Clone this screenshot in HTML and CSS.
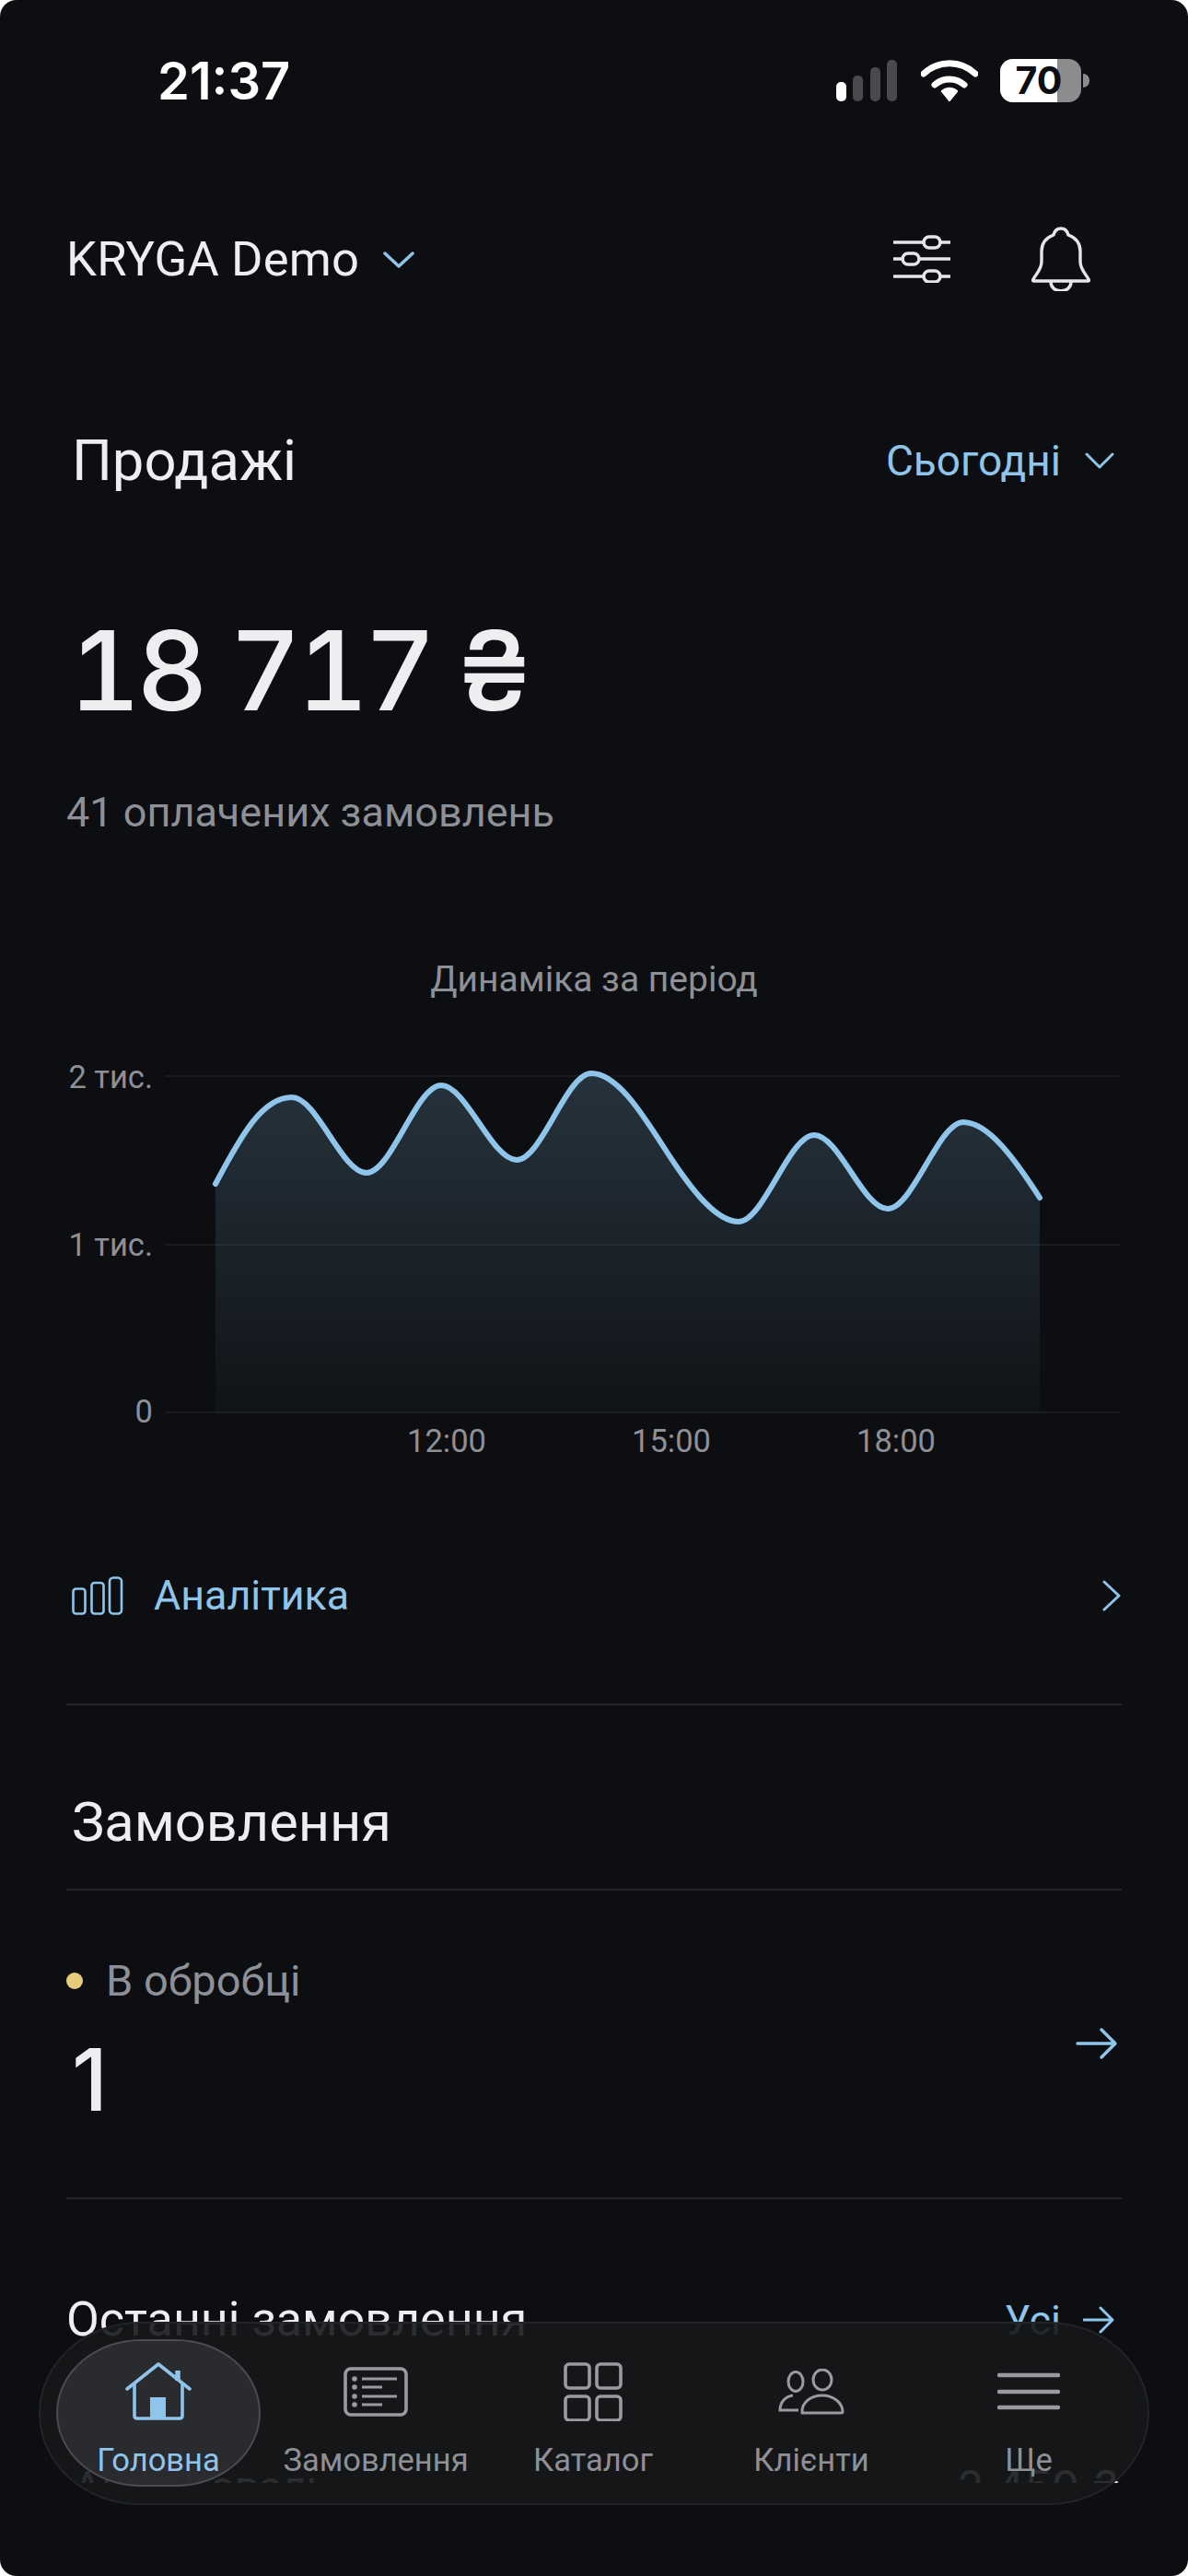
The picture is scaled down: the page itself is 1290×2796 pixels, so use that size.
FILE: index.html
```html
<!DOCTYPE html>
<html lang="uk">
<head>
<meta charset="utf-8">
<title>KRYGA Demo</title>
<link rel="stylesheet" href="styles.css">
</head>
<body>
<div class="screen">
  <main class="content">
    <div class="status">
      <span class="time">21:37</span>
      <div class="status-icons">
        <svg width="68" height="46" viewBox="0 0 68 46"><rect x="0" y="24" width="11" height="21" rx="5" fill="#fff"/><rect x="18" y="17" width="11" height="28" rx="5" fill="#4a4a4c"/><rect x="37" y="8" width="11" height="37" rx="5" fill="#4a4a4c"/><rect x="55" y="0" width="11" height="45" rx="5" fill="#4a4a4c"/></svg>
        <svg class="wifi" width="62" height="46" viewBox="0 0 62 46" fill="none"><path d="M3 15C19 0 43 0 59 15" stroke="#fff" stroke-width="7" stroke-linecap="round"/><path d="M15 27C24 19 38 19 47 27" stroke="#fff" stroke-width="7" stroke-linecap="round"/><path d="M22 34C27 29 35 29 40 34L31 45Z" fill="#fff" stroke="#fff" stroke-width="1" stroke-linejoin="round"/></svg>
        <div class="battery"><span class="battery-fill"></span><span class="battery-num">70</span><span class="battery-nub"></span></div>
      </div>
    </div>

    <header class="topbar">
      <div class="store">
        <span class="store-name">KRYGA Demo</span>
        <svg class="chev" width="34" height="20" viewBox="0 0 34 20" fill="none"><path d="M2 3L17 17L32 3" stroke="#8fc5ea" stroke-width="3.5" stroke-linecap="round" stroke-linejoin="round"/></svg>
      </div>
      <div class="top-actions">
        <svg width="62" height="52" viewBox="0 0 62 52" fill="none" stroke="#e6e6ea" stroke-width="3.4"><path d="M1 8H33M51 8H61M1 26H10M28 26H61M1 45H33M51 45H61" stroke-linecap="round"/><rect x="33" y="2" width="18" height="12" rx="6"/><rect x="10" y="20" width="18" height="12" rx="6"/><rect x="33" y="39" width="18" height="12" rx="6"/></svg>
        <svg width="64" height="70" viewBox="0 0 64 70" fill="none" stroke="#e6e6ea" stroke-width="3.4" stroke-linejoin="round"><path d="M32 2C27 2 25 5 24 9C16 12 11 18 11 27V38C11 46 6 50 2 57C1 59 2 59 4 59H60C62 59 63 59 62 57C58 50 53 46 53 38V27C53 18 48 12 40 9C39 5 37 2 32 2Z"/><path d="M21 60C21 73 43 73 43 60"/></svg>
      </div>
    </header>

    <section class="sales">
      <div class="section-head">
        <h2 class="h-title sales-title">Продажі</h2>
        <div class="period">
          <span>Сьогодні</span>
          <svg width="32" height="18" viewBox="0 0 32 18" fill="none"><path d="M2 2L16 16L30 2" stroke="#8fc5ea" stroke-width="3" stroke-linecap="round" stroke-linejoin="round"/></svg>
        </div>
      </div>
      <div class="amount">18 717 ₴</div>
      <div class="paid">41 оплачених замовлень</div>
    </section>

    <section class="chart-wrap">
      <div class="chart-title">Динаміка за період</div>
      <svg class="chart" width="1290" height="420" viewBox="0 1150 1290 420">
        <defs>
          <linearGradient id="area" x1="0" y1="0" x2="0" y2="1">
            <stop offset="0" stop-color="#8fc5ea" stop-opacity=".2"/>
            <stop offset="1" stop-color="#8fc5ea" stop-opacity=".03"/>
          </linearGradient>
        </defs>
        <path fill="url(#area)" d="M234 1285C262 1232 285 1191 317 1191C344 1191 371 1273 398 1273C425 1273 452 1178 479 1178C506 1178 534 1259 561 1259C588 1259 615 1165 642 1165C669 1165 695 1205 720 1244C745 1283 775 1326 802 1326C829 1326 857 1232 884 1232C911 1232 937 1312 964 1312C991 1312 1019 1218 1046 1218C1073 1218 1102 1258 1129 1300V1533H234Z"/>
        <g stroke="#fff" stroke-opacity=".05" stroke-width="2"><path d="M179 1168H1217"/><path d="M179 1351H1217"/><path d="M179 1533H1217"/></g>
        <path fill="none" stroke="#8fc5ea" stroke-width="6" stroke-linecap="round" d="M234 1285C262 1232 285 1191 317 1191C344 1191 371 1273 398 1273C425 1273 452 1178 479 1178C506 1178 534 1259 561 1259C588 1259 615 1165 642 1165C669 1165 695 1205 720 1244C745 1283 775 1326 802 1326C829 1326 857 1232 884 1232C911 1232 937 1312 964 1312C991 1312 1019 1218 1046 1218C1073 1218 1102 1258 1129 1300"/>
        <g class="axis">
          <text x="166" y="1181" text-anchor="end">2 тис.</text>
          <text x="166" y="1363" text-anchor="end">1 тис.</text>
          <text x="166" y="1544" text-anchor="end">0</text>
          <text x="485" y="1576" text-anchor="middle">12:00</text>
          <text x="729" y="1576" text-anchor="middle">15:00</text>
          <text x="973" y="1576" text-anchor="middle">18:00</text>
        </g>
      </svg>
    </section>

    <a class="analytics">
      <svg width="56" height="42" viewBox="0 0 56 42" fill="none" stroke="#8fc5ea" stroke-width="2.6"><rect x="1.5" y="13.5" width="13" height="27" rx="3"/><rect x="21.5" y="7" width="13" height="33.5" rx="3"/><rect x="41" y="1.5" width="13" height="39" rx="4"/></svg>
      <span class="analytics-label">Аналітика</span>
      <svg class="row-chev" width="22" height="34" viewBox="0 0 22 34" fill="none"><path d="M3 2L19 17L3 32" stroke="#8fc5ea" stroke-width="3" stroke-linecap="round" stroke-linejoin="round"/></svg>
    </a>

    <section class="orders">
      <h2 class="h-title orders-title">Замовлення</h2>
      <div class="order-status">
        <div>
          <div class="status-line"><span class="dot"></span>В обробці</div>
          <div class="count">1</div>
        </div>
        <svg width="46" height="36" viewBox="0 0 46 36" fill="none"><path d="M2 18H43M28 3L43 18L28 33" stroke="#8fc5ea" stroke-width="3.4" stroke-linecap="round" stroke-linejoin="round"/></svg>
      </div>
    </section>

    <section class="recent">
      <div class="recent-head">
        <h3 class="recent-title">Останні замовлення</h3>
        <div class="recent-all">Усі
          <svg width="34" height="30" viewBox="0 0 34 30" fill="none"><path d="M1 15H32M19 2L32 15L19 28" stroke="#8fc5ea" stroke-width="3" stroke-linecap="round" stroke-linejoin="round"/></svg>
        </div>
      </div>
      <div class="recent-row">
        <span class="client">Анна Коваль</span>
        <span class="client-sum">2 450 ₴</span>
      </div>
    </section>
  </main>

  <nav class="tabbar">
    <a class="tab tab-active">
      <span class="tab-icon"><svg width="72" height="64" viewBox="0 0 72 64" fill="none" stroke="#8fc5ea" stroke-width="3.6" stroke-linecap="round" stroke-linejoin="round"><path d="M2 29L36 2L70 29"/><path d="M57 9V20" stroke-width="5.5" stroke-linecap="butt"/><path d="M10 24V58C10 60 11 61 13 61H59C61 61 62 60 62 58V24"/><rect x="27" y="38" width="17" height="23" fill="#8fc5ea" stroke-width="0"/></svg></span>
      <span>Головна</span>
    </a>
    <a class="tab">
      <span class="tab-icon"><svg width="70" height="54" viewBox="0 0 70 54" fill="none" stroke="#9a9ba0" stroke-width="3"><rect x="2" y="2" width="66" height="50" rx="6" stroke-width="3.6"/><path d="M20 13H58M20 22H42M20 32H58M20 41H42"/><g fill="#9a9ba0" stroke="none"><circle cx="12" cy="13" r="2.8"/><circle cx="12" cy="22" r="2.8"/><circle cx="12" cy="32" r="2.8"/><circle cx="12" cy="41" r="2.8"/></g></svg></span>
      <span>Замовлення</span>
    </a>
    <a class="tab">
      <span class="tab-icon"><svg width="64" height="64" viewBox="0 0 64 64" fill="none" stroke="#9a9ba0" stroke-width="3.6"><rect x="2" y="2" width="26" height="26" rx="4"/><rect x="36" y="2" width="26" height="26" rx="4"/><rect x="2" y="37" width="26" height="26" rx="4"/><rect x="36" y="37" width="26" height="26" rx="4"/></svg></span>
      <span>Каталог</span>
    </a>
    <a class="tab">
      <span class="tab-icon"><svg width="72" height="50" viewBox="0 0 72 50" fill="none" stroke="#9a9ba0" stroke-width="3"><ellipse cx="19" cy="14" rx="8" ry="10.5"/><ellipse cx="48" cy="12" rx="10" ry="11"/><path d="M22 45H2C2 36 8 30 16 29"/><path d="M26 48C25 37 35 29 48 29C60 29 70 37 70 47C70 48 69 48 68 48Z"/></svg></span>
      <span>Клієнти</span>
    </a>
    <a class="tab">
      <span class="tab-icon"><svg width="68" height="42" viewBox="0 0 68 42" fill="none" stroke="#9a9ba0" stroke-width="4.4" stroke-linecap="round"><path d="M2 3H66M2 21H66M2 38H66"/></svg></span>
      <span>Ще</span>
    </a>
  </nav>
</div>
</body>
</html>
```

FILE: styles.css
```css
* { box-sizing: border-box; }
html, body { margin: 0; padding: 0; background: #fff; }
body { width: 1290px; height: 2796px; overflow: hidden; }
h2, h3 { margin: 0; font-weight: 400; }

.screen {
  position: relative;
  width: 1290px;
  height: 2796px;
  background: #0c0e11;
  border-radius: 18px;
  overflow: hidden;
  font-family: Roboto, "Noto Sans", sans-serif;
  color: #eeeef0;
}

.content {
  height: 2695px;
  overflow: hidden;
  padding: 0 72px;
}

/* status bar */
.status {
  height: 226px;
  padding: 63px 36px 0 99px;
  display: flex;
  justify-content: space-between;
  align-items: flex-start;
}
.time {
  font-family: Inter, sans-serif;
  font-weight: 600;
  font-size: 56px;
  line-height: 50px;
  color: #fff;
}
.status-icons { display: flex; gap: 24px; align-items: flex-start; padding-top: 2px; }
.battery {
  position: relative;
  width: 88px;
  height: 47px;
  margin-top: -1px;
  margin-right: 8px;
  border-radius: 14px;
  background: #8c8c8e;
}
.battery-fill {
  position: absolute;
  left: 0;
  top: 0;
  bottom: 0;
  width: 62px;
  background: #fff;
  border-radius: 14px 0 0 14px;
}
.battery-num {
  position: absolute;
  inset: 0;
  text-align: center;
  font-family: Inter, sans-serif;
  font-weight: 700;
  font-size: 41px;
  line-height: 47px;
  color: #0c0e11;
  padding-right: 4px;
}
.battery-nub {
  position: absolute;
  right: -9px;
  top: 16px;
  width: 7px;
  height: 15px;
  background: #8c8c8e;
  border-radius: 0 8px 8px 0;
}

/* top bar */
.topbar {
  height: 110px;
  display: flex;
  justify-content: space-between;
  align-items: center;
}
.store { display: flex; align-items: center; gap: 26px; }
.store-name { font-size: 52.5px; line-height: 60px; letter-spacing: .2px; color: #eeeef0; }
.chev { margin-top: 2px; }
.top-actions { display: flex; align-items: center; gap: 88px; padding-right: 34px; }

/* sales */
.sales { margin-top: 130px; }
.section-head {
  display: flex;
  justify-content: space-between;
  align-items: center;
  padding-left: 6px;
  height: 68px;
}
.h-title { font-size: 59.5px; line-height: 68px; color: #eeeef0; }
.sales-title { font-size: 61.5px; }
.period {
  display: flex;
  align-items: center;
  gap: 26px;
  font-size: 46px;
  color: #8fc5ea;
  margin-right: 8px;
}
.amount {
  margin-top: 129px;
  padding-left: 3px;
  font-family: Inter, Roboto, sans-serif;
  font-weight: 500;
  font-size: 120px;
  line-height: 130px;
  letter-spacing: -4.5px;
  font-variant-numeric: tabular-nums;
  color: #eeeef0;
}
.paid {
  margin-top: 64px;
  font-size: 45px;
  line-height: 50px;
  color: #8e9097;
}

/* chart */
.chart-wrap { position: relative; }
.chart-title {
  margin-top: 134px;
  text-align: center;
  font-size: 39px;
  line-height: 44px;
  color: #8e9097;
}
.chart { display: block; margin: 65px 0 0 -72px; overflow: visible; }
.axis text { font-family: Roboto, sans-serif; font-size: 34.5px; fill: #8e9097; }

/* analytics */
.analytics {
  display: flex;
  align-items: center;
  gap: 33px;
  height: 234px;
  margin-top: 45px;
  padding-left: 6px;
  color: #8fc5ea;
}
.analytics-label { flex: 1; font-size: 44.8px; line-height: 52px; color: #8fc5ea; }

/* orders */
.orders { border-top: 2px solid #222427; }
.orders-title {
  height: 201px;
  padding: 93px 0 0 6px;
  border-bottom: 2px solid #222427;
}
.order-status {
  height: 335px;
  padding-top: 72px;
  border-bottom: 2px solid #222427;
  display: flex;
  justify-content: space-between;
  align-items: flex-start;
}
.order-status > svg { margin: 76px 4px 0 0; }
.status-line {
  display: flex;
  align-items: center;
  gap: 25px;
  font-size: 47px;
  line-height: 52px;
  color: #8e9097;
}
.dot { width: 18px; height: 18px; border-radius: 50%; background: #e6cd7d; }
.count {
  font-family: Inter, Roboto, sans-serif;
  font-size: 94px;
  font-weight: 500;
  line-height: 112px;
  margin-top: 25px;
  padding-left: 6px;
  color: #eeeef0;
}

/* recent */
.recent { padding-top: 100px; }
.recent-head { display: flex; justify-content: space-between; align-items: center; height: 62px; }
.recent-title { font-size: 52px; line-height: 62px; color: #eeeef0; }
.recent-all {
  display: flex;
  align-items: center;
  gap: 24px;
  font-size: 45px;
  color: #8fc5ea;
  margin-right: 8px;
}
.recent-row {
  display: flex;
  justify-content: space-between;
  align-items: flex-start;
  margin-top: 122px;
  padding: 0 2px 0 8px;
}
.client { font-size: 46px; line-height: 56px; color: #eeeef0; }
.client-sum { font-family: Inter, Roboto, sans-serif; font-size: 48px; line-height: 56px; color: #eeeef0; }

/* tab bar */
.tabbar {
  position: absolute;
  left: 42px;
  top: 2520px;
  width: 1206px;
  height: 199px;
  display: grid;
  grid-template-columns: 256px 216px 256px 218px 254px;
  background: rgba(21, 23, 26, .9);
  border: 2px solid #222427;
  border-radius: 110px / 100px;
}
.tab {
  display: flex;
  flex-direction: column;
  align-items: center;
  padding-top: 39px;
  font-size: 34.5px;
  line-height: 44px;
  color: #8f9095;
}
.tab-icon {
  display: flex;
  align-items: center;
  justify-content: center;
  height: 70px;
  margin-bottom: 17px;
}
.tab-active {
  position: relative;
  color: #8fc5ea;
}
.tab-active::before {
  content: "";
  position: absolute;
  left: 17px;
  right: 17px;
  top: 17px;
  bottom: 18px;
  background: rgba(45, 46, 50, .92);
  border: 2px solid #4a4b4f;
  border-radius: 92px / 80px;
}
.tab-active > * { position: relative; }
```
